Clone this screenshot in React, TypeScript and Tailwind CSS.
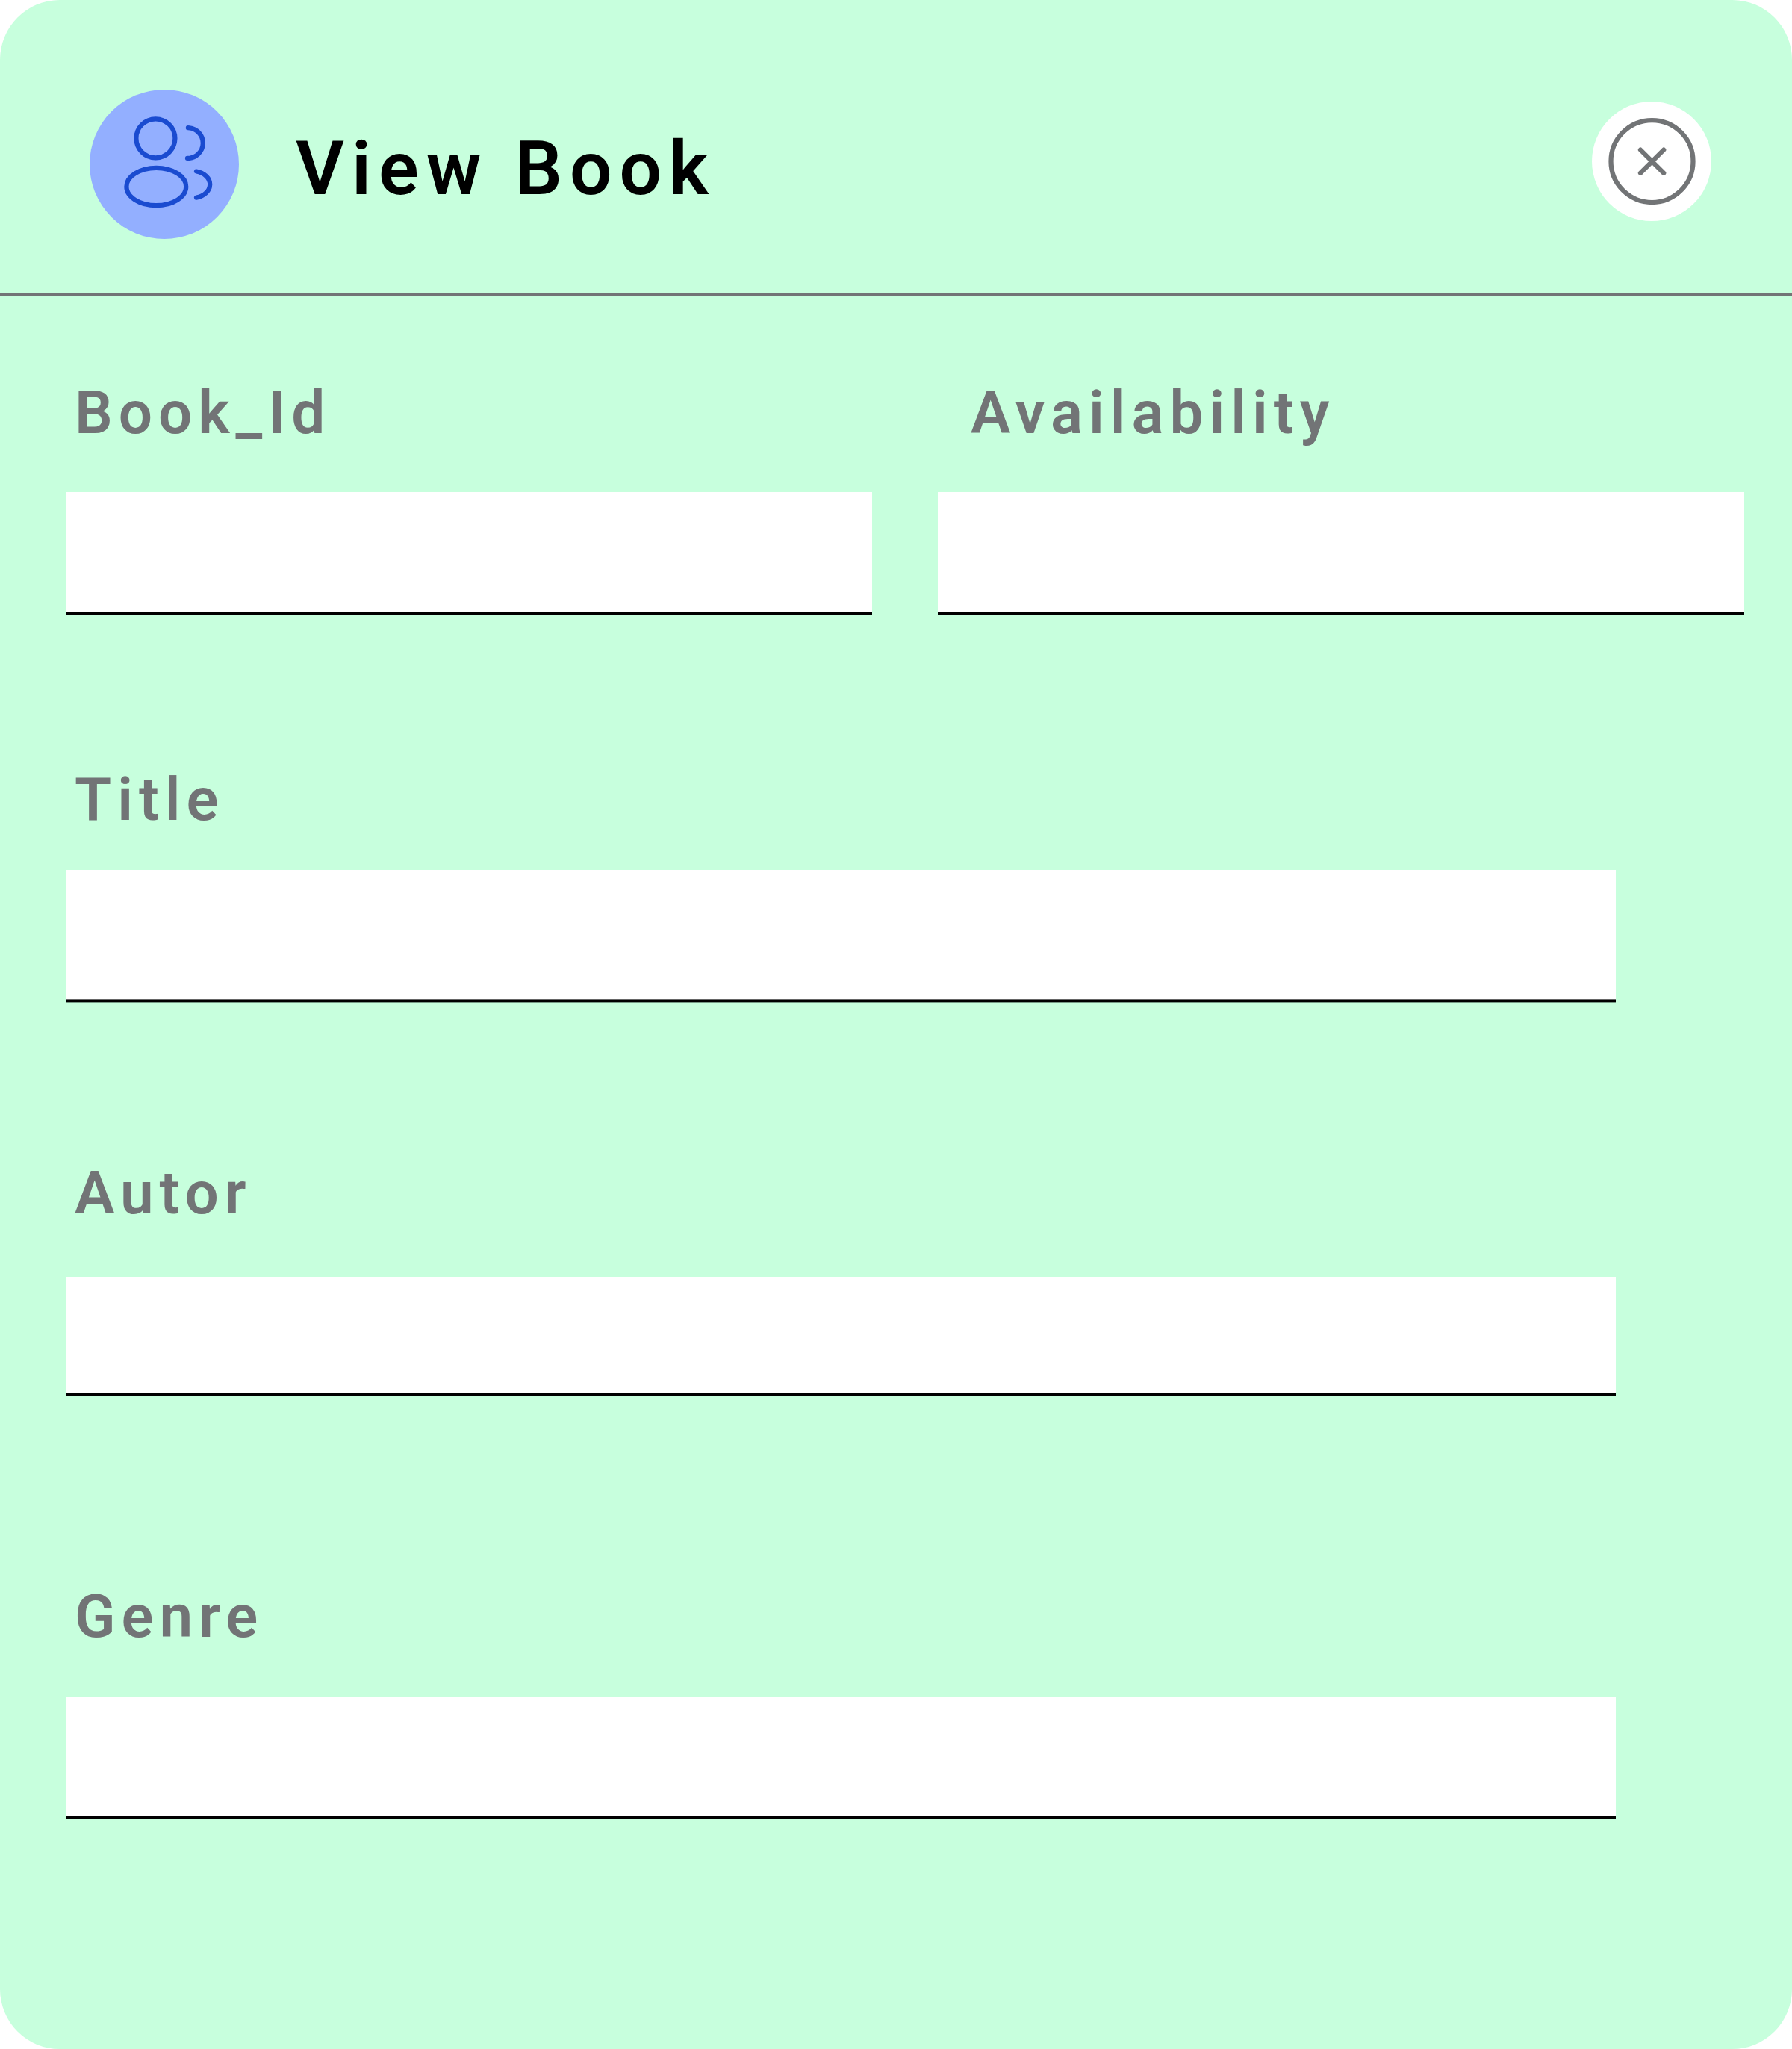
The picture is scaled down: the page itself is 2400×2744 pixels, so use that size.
type FieldProps = {
  label: string;
  className?: string;
  labelClass?: string;
  inputClass: string;
  lineClass: string;
};

function Field({ label, className = "", labelClass = "pl-3", inputClass, lineClass }: FieldProps) {
  return (
    <label className={`flex flex-col ${className}`}>
      <span
        className={`text-[80px] leading-[94px] font-semibold tracking-[8px] whitespace-nowrap text-[#727476] ${labelClass}`}
      >
        {label}
      </span>
      <input
        type="text"
        readOnly
        className={`block w-full bg-white px-8 text-[64px] text-black outline-none ${inputClass}`}
      />
      <span className={`block w-full ${lineClass}`} />
    </label>
  );
}

function UsersIcon() {
  return (
    <svg
      viewBox="0 0 200 200"
      className="size-[200px]"
      fill="none"
      stroke="#1A4BD0"
      strokeWidth="6.25"
      strokeLinecap="round"
    >
      <circle cx="88.4" cy="65.3" r="26" />
      <ellipse cx="89.3" cy="130" rx="39.9" ry="25.2" />
      <path d="M131.9 51.2A20.3 20.3 0 0 1 131 91.9" />
      <path d="M143 109.5C153.5 111.3 161.2 118.6 161.2 127C161.2 135.4 153.5 142.8 143 144.6" />
    </svg>
  );
}

function CloseIcon() {
  return (
    <svg
      viewBox="0 0 160 160"
      className="size-[160px]"
      fill="none"
      stroke="#727476"
      strokeWidth="6.25"
      strokeLinecap="round"
    >
      <circle cx="80.5" cy="80" r="55" />
      <path d="M65 64.6L96.2 95.8M96.2 64.6L65 95.8" />
    </svg>
  );
}

export default function App() {
  return (
    <div className="w-[2400px] bg-white font-['Roboto',sans-serif]">
      <div className="flex h-[2744px] flex-col overflow-hidden rounded-[80px] bg-[#C7FFDD]">
        <header className="flex h-[396px] shrink-0 items-start border-b-4 border-[#727476] pr-[108px] pl-[120px]">
          <div className="mt-[120px] size-[200px] rounded-full bg-[#93AFFF]">
            <UsersIcon />
          </div>
          <h1 className="mt-[167px] ml-[76px] text-[100px] leading-[117px] font-semibold tracking-[10px] whitespace-nowrap text-black">
            View Book
          </h1>
          <button type="button" aria-label="Close" className="mt-[136px] ml-auto size-40 rounded-full bg-white">
            <CloseIcon />
          </button>
        </header>

        <main className="flex flex-col pt-[110px] pr-16 pl-[88px]">
          <div className="grid grid-cols-2 gap-[88px]">
            <Field
              label="Book_Id"
              inputClass="mt-[59px] h-[160px]"
              lineClass="h-[5px] bg-[linear-gradient(#999_1px,#000_1px,#000_4px,#50665a_4px)]"
            />
            <Field
              label="Availability"
              labelClass="pl-11"
              inputClass="mt-[59px] h-[160px]"
              lineClass="h-[5px] bg-[linear-gradient(#999_1px,#000_1px,#000_4px,#50665a_4px)]"
            />
          </div>
          <Field
            label="Title"
            className="mt-[200px] w-[2076px]"
            inputClass="mt-[47px] h-[173px]"
            lineClass="h-[5px] bg-[linear-gradient(#666_1px,#000_1px,#000_4px,#779985_4px)]"
          />
          <Field
            label="Autor"
            className="mt-[208px] w-[2076px]"
            inputClass="mt-[65px] h-[155px]"
            lineClass="h-[5px] bg-[linear-gradient(#b3b3b3_1px,#000_1px,#000_4px,#3c4d42_4px)]"
          />
          <Field
            label="Genre"
            className="mt-[248px] w-[2076px]"
            inputClass="mt-[60px] h-[160px]"
            lineClass="h-1 bg-black"
          />
        </main>
      </div>
    </div>
  );
}
